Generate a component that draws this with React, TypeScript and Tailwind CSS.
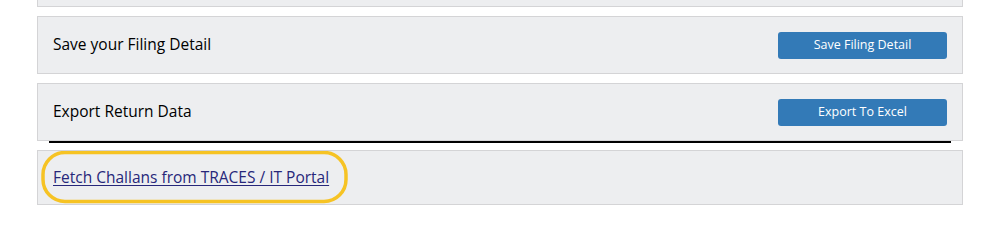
import React from "react";

const font = { fontFamily: '"Open Sans", "Noto Sans", Arial, sans-serif' };

function Panel({ title, button }: { title: string; button: string }) {
  return (
    <div className="flex h-[58px] items-center justify-between border border-[#d4d4d6] bg-[#edeef0] pl-[15px] pr-[15px]">
      <span className="text-[15.5px] font-medium text-black">{title}</span>
      <button className="h-[27px] w-[169px] rounded-[3px] bg-[#337ab7] text-[12.5px] text-white">
        {button}
      </button>
    </div>
  );
}

export default function App() {
  return (
    <div className="h-[239px] w-[1000px] bg-white" style={font}>
      <div className="ml-[37px] w-[926px] pt-0">
        <div className="h-[7px] border-x border-b border-[#d4d4d6] bg-[#edeef0]" />
        <div className="mt-[9px]">
          <Panel title="Save your Filing Detail" button="Save Filing Detail" />
        </div>
        <div className="mt-[9px]">
          <Panel title="Export Return Data" button="Export To Excel" />
        </div>
        <div className="mx-[12px] h-[2px] bg-black" />
        <div className="relative mt-[7px] flex h-[55px] items-center border border-[#d4d4d6] bg-[#edeef0] pl-[15px]">
          <a href="#" className="text-[15.5px] text-[#27277a] underline underline-offset-2">
            Fetch Challans from TRACES / IT Portal
          </a>
          <svg className="pointer-events-none absolute left-0 top-0" width="320" height="56">
            <rect x="5" y="1.5" width="303" height="49" rx="22" ry="22" fill="none" stroke="#f6c324" strokeWidth="3.5" />
          </svg>
        </div>
      </div>
    </div>
  );
}
